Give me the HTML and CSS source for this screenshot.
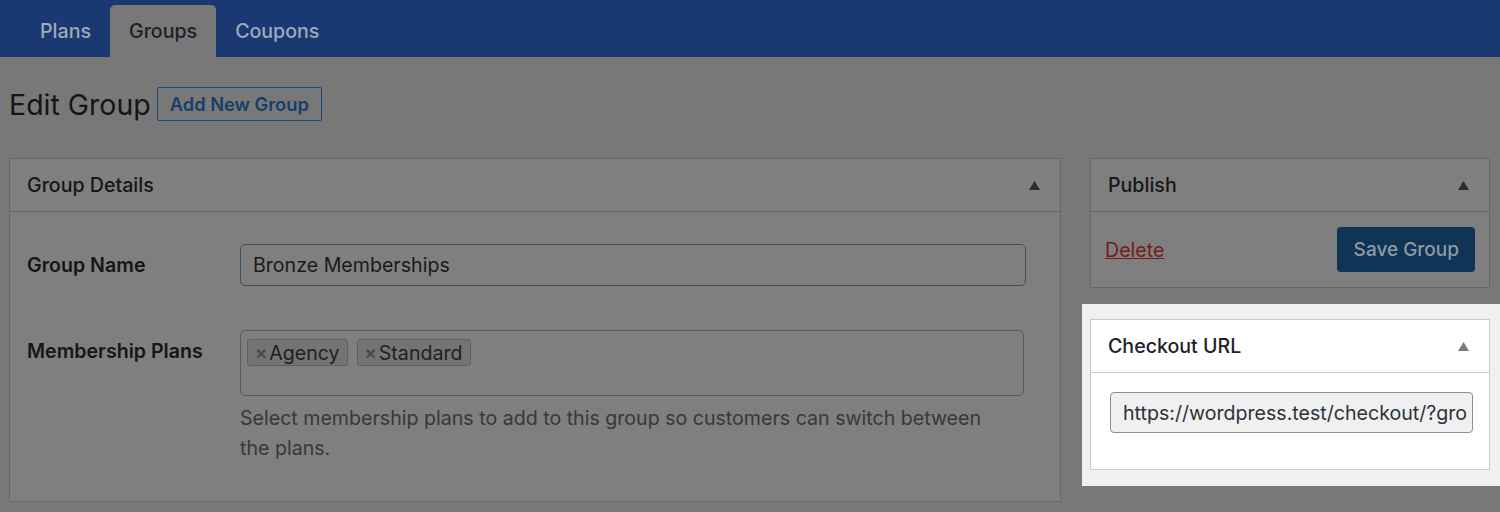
FILE: index.html
```html
<!DOCTYPE html>
<html lang="en">
<head>
    <meta charset="UTF-8">
    <meta name="viewport" content="width=device-width, initial-scale=1.0">
    <title>Edit Group</title>
    <link rel="stylesheet" href="styles.css">
</head>
<body>

    <!-- top tabs -->
    <nav class="tabs">
        <a class="tab">Plans</a>
        <a class="tab active">Groups</a>
        <a class="tab">Coupons</a>
    </nav>

    <main class="page">
        <div class="title-row">
            <h1>Edit Group</h1>
            <a class="btn-outline">Add New Group</a>
        </div>

        <div class="columns">
            <section class="card">
                <div class="card-head">
                    <h2>Group Details</h2>
                    <svg class="toggle" width="11" height="9" viewBox="0 0 11 9"><polygon points="5.5,0 11,9 0,9"/></svg>
                </div>
                <div class="card-body details">
                    <div class="row row-name">
                        <label>Group Name</label>
                        <div class="field">
                            <div class="input">Bronze Memberships</div>
                        </div>
                    </div>
                    <div class="row row-plans">
                        <label>Membership Plans</label>
                        <div class="field">
                            <div class="select">
                                <span class="chip"><span class="x">×</span>Agency</span>
                                <span class="chip"><span class="x">×</span>Standard</span>
                            </div>
                            <p class="help">Select membership plans to add to this group so customers can switch between the plans.</p>
                        </div>
                    </div>
                </div>
            </section>

            <aside class="side">
                <section class="card">
                    <div class="card-head">
                        <h2>Publish</h2>
                        <svg class="toggle" width="11" height="9" viewBox="0 0 11 9"><polygon points="5.5,0 11,9 0,9"/></svg>
                    </div>
                    <div class="card-body publish">
                        <a class="delete">Delete</a>
                        <a class="btn-primary">Save Group</a>
                    </div>
                </section>

                <!-- highlighted box -->
                <div class="spotlight">
                    <section class="card card-light">
                        <div class="card-head">
                            <h2>Checkout URL</h2>
                            <svg class="toggle" width="11" height="9" viewBox="0 0 11 9"><polygon points="5.5,0 11,9 0,9"/></svg>
                        </div>
                        <div class="card-body checkout">
                            <input class="url" type="text" readonly value="https://wordpress.test/checkout/?group=bronze-memberships">
                        </div>
                    </section>
                </div>
            </aside>
        </div>
    </main>

</body>
</html>
```

FILE: styles.css
```css
* {
    margin: 0;
    padding: 0;
    box-sizing: border-box;
}

body {
    font-family: 'Inter', 'Noto Sans', sans-serif;
    background-color: #787878;
    color: #161616;
    font-size: 19.6px;
}

/* tabs bar */
.tabs {
    background-color: #1a3872;
    height: 57px;
    display: flex;
    align-items: flex-end;
    padding-left: 21px;
}

.tab {
    height: 52px;
    display: flex;
    align-items: center;
    padding: 0 19px;
    font-size: 19.6px;
    font-weight: 500;
    color: #a0a8b9;
    border-radius: 5px 5px 0 0;
}

.tab.active {
    background-color: #787878;
    color: #1c1f2c;
}

.page {
    padding: 30px 10px 0 9px;
}

.title-row {
    display: flex;
    align-items: center;
    gap: 6px;
    height: 34px;
}

h1 {
    font-size: 28.5px;
    font-weight: 400;
    color: #151515;
}

.btn-outline {
    height: 34px;
    display: flex;
    align-items: center;
    padding: 0 12px;
    border: 1px solid #1c4775;
    border-radius: 2px;
    color: #163f69;
    font-size: 18.3px;
    font-weight: 600;
}

.columns {
    display: grid;
    grid-template-columns: 1fr 400px;
    gap: 29px;
    margin-top: 37px;
    align-items: start;
}

/* cards */
.card {
    background-color: #7f7f7f;
    border: 1px solid #686868;
}

.card-head {
    height: 53px;
    display: flex;
    align-items: center;
    justify-content: space-between;
    padding: 0 20px 0 17px;
    border-bottom: 1px solid #686868;
}

.card-head h2 {
    font-size: 19.6px;
    font-weight: 500;
    color: #161616;
}

.toggle {
    fill: #2c2c2c;
}

.details {
    padding: 32px 34px 38px 17px;
}

.row {
    display: grid;
    grid-template-columns: 213px 1fr;
}

.row label {
    font-weight: 600;
    color: #161616;
}

.row-name {
    align-items: center;
}

.row-plans {
    margin-top: 44px;
}

.row-plans label {
    padding-top: 9px;
}

.input {
    height: 42px;
    border: 1px solid #4c4c4c;
    border-radius: 5px;
    display: flex;
    align-items: center;
    padding-left: 12px;
    color: #1a1a1a;
}

.select {
    height: 66px;
    border: 1px solid #5a5a5a;
    border-radius: 5px;
    padding: 8px 6px;
    display: flex;
    align-items: flex-start;
    gap: 9px;
    margin-right: 2px;
}

.chip {
    height: 27px;
    display: flex;
    align-items: center;
    padding: 0 7px 0 7px;
    background-color: #747474;
    border: 1px solid #606060;
    border-radius: 3px;
    color: #1f1f1f;
}

.chip .x {
    font-size: 18px;
    color: #4a4a4a;
    margin-right: 2px;
    font-weight: 700;
}

.help {
    margin-top: 7px;
    line-height: 30px;
    color: #383838;
    max-width: 745px;
}

.side {
    display: flex;
    flex-direction: column;
}

.publish {
    height: 75px;
    display: flex;
    align-items: center;
    justify-content: space-between;
    padding: 0 14px 0 14px;
}

.delete {
    color: #761b1b;
    text-decoration: underline;
    margin-top: 1px;
}

.btn-primary {
    height: 45px;
    display: flex;
    align-items: center;
    padding: 0 16px 0 17px;
    background-color: #0f3456;
    color: #8e9aa6;
    border-radius: 4px;
    font-weight: 500;
    font-size: 19px;
}

/* highlighted checkout box */
.spotlight {
    background-color: #f0f0f1;
    margin: 16px -10px 0 -8px;
    padding: 15px 10px 16px 8px;
}

.card-light {
    background-color: #ffffff;
    border-color: #c9cacd;
}

.card-light .card-head {
    border-bottom-color: #c9cacd;
}

.card-light .card-head h2 {
    color: #1d2327;
}

.card-light .toggle {
    fill: #787c82;
}

.checkout {
    padding: 19px 16px 36px 19px;
}

.url {
    display: block;
    width: 100%;
    height: 41px;
    background-color: #f0f0f1;
    border: 1px solid #8c8f94;
    border-radius: 4px;
    padding: 0 4px 0 12px;
    font-family: inherit;
    font-size: 19.6px;
    color: #2c3338;
    outline: none;
}
```
